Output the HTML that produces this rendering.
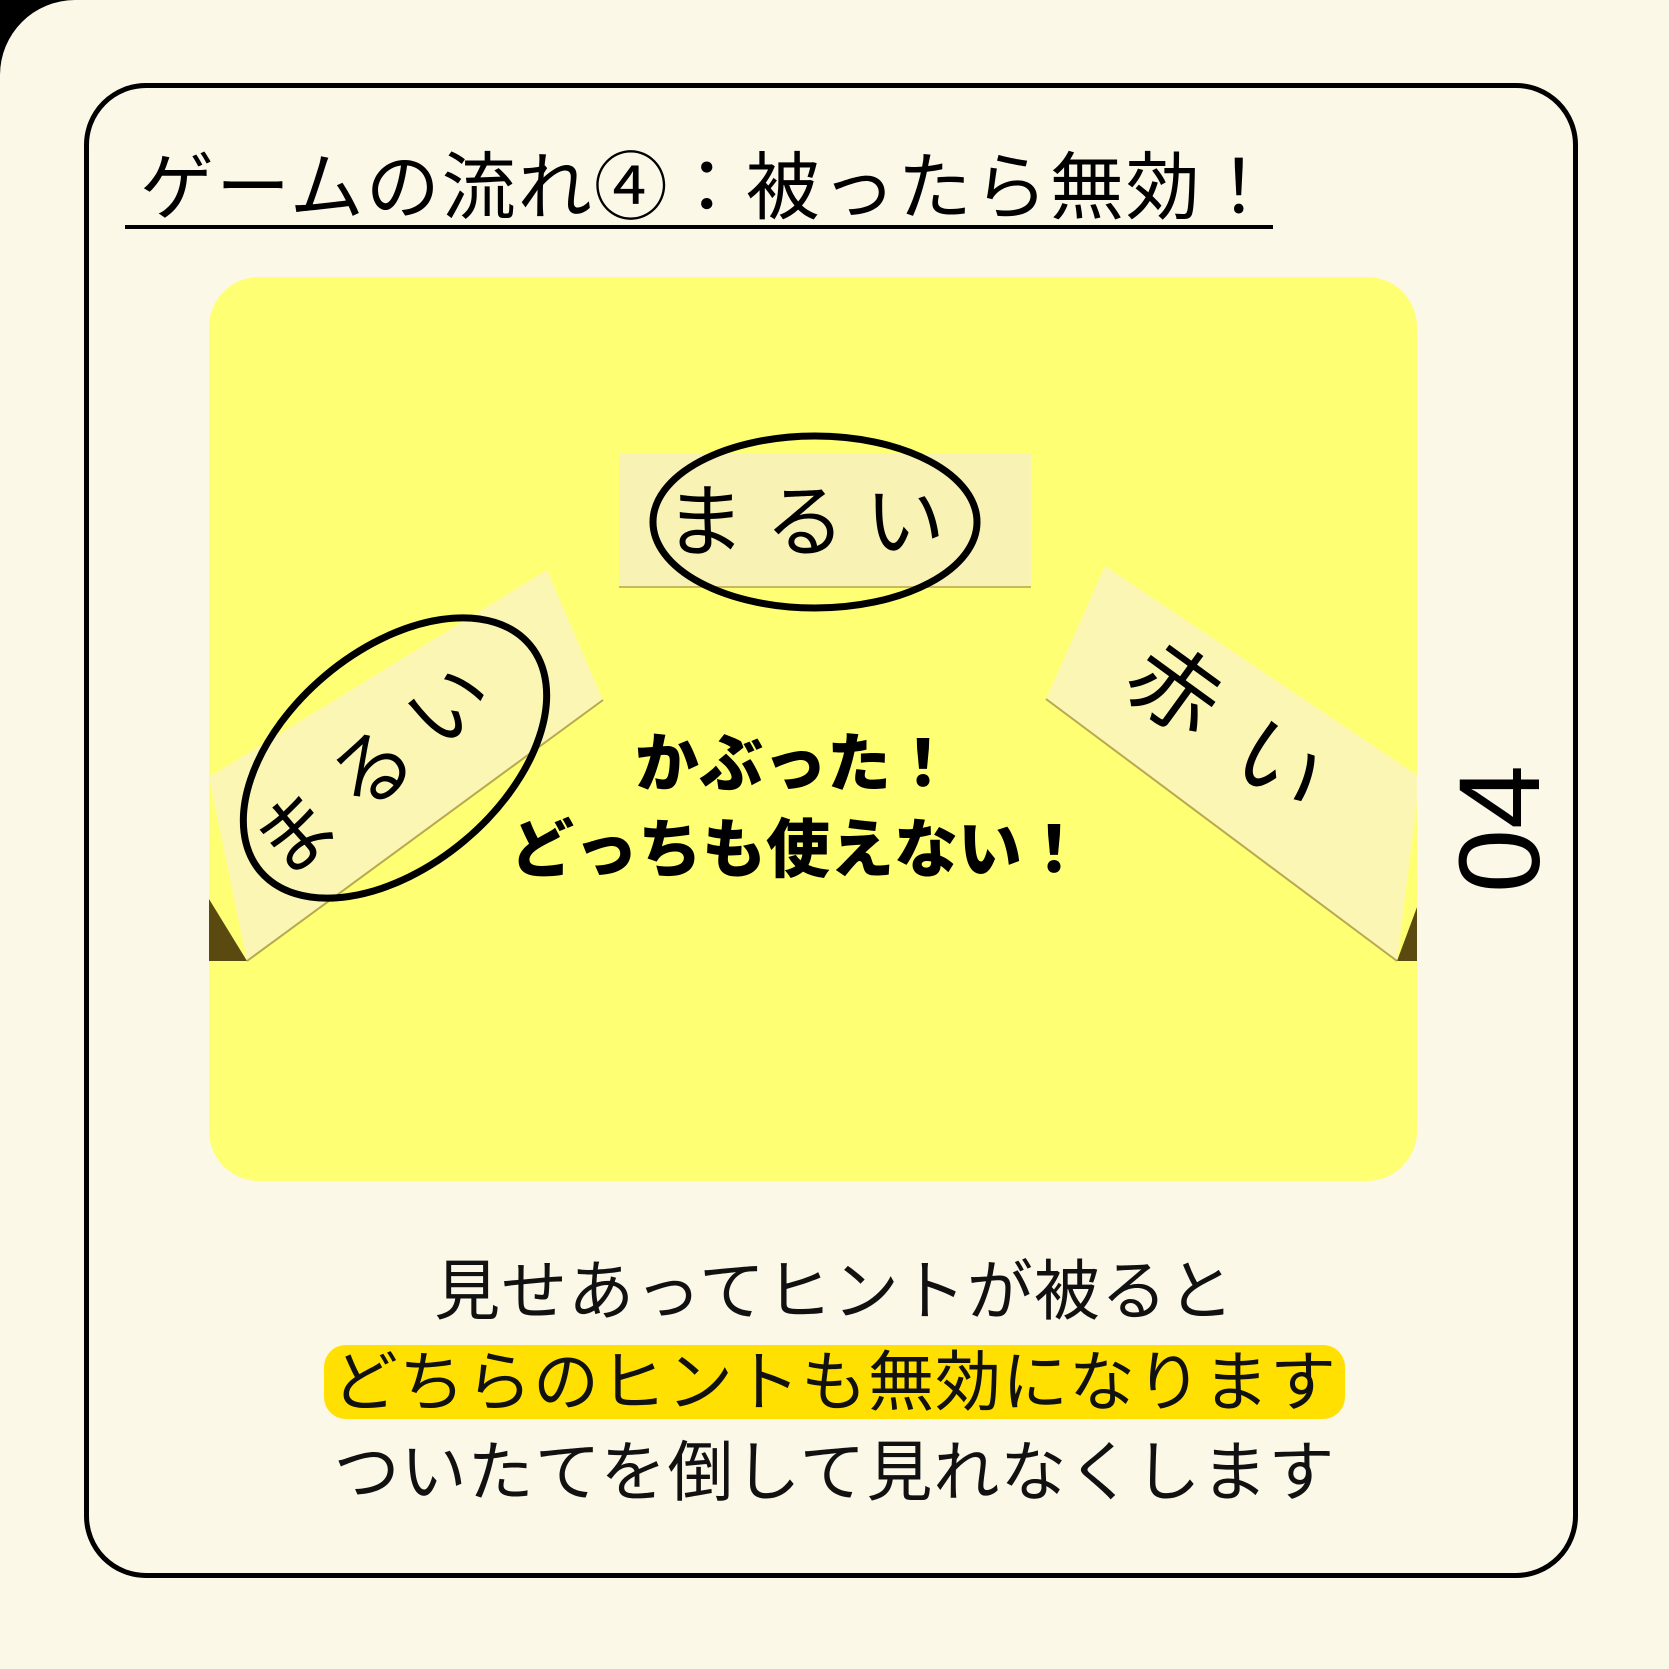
<!DOCTYPE html>
<html><head><meta charset="utf-8"><style>
html,body{margin:0;padding:0}
body{width:1669px;height:1669px;background:#000;position:relative;overflow:hidden;font-family:"Liberation Sans","Noto Sans CJK JP",sans-serif}
.bg{position:absolute;left:0;top:0;width:1669px;height:1669px;background:#fbf8e8;border-top-left-radius:75px}
.frame{position:absolute;left:84px;top:83px;width:1494px;height:1495px;border:5px solid #000;border-radius:62px;box-sizing:border-box}
.title{position:absolute;left:140px;top:138px;font-size:74px;line-height:100px;white-space:nowrap;color:#000;letter-spacing:2px}
.uline{position:absolute;left:125px;top:225px;width:1148px;height:4px;background:#000}
.panel{position:absolute;left:209px;top:277px;width:1208px;height:904px;background:#ffff73;border-radius:50px;overflow:hidden}
.line{position:absolute;left:0;width:1669px;text-align:center;font-size:66px;line-height:80px;color:#111;white-space:nowrap;letter-spacing:1px}
.hl{background:#ffe000;border-radius:22px;padding:0 8px}
.num{position:absolute;left:1440px;top:775px;width:120px;height:116px;font-size:115px;line-height:116px;transform:rotate(-90deg);text-align:center;color:#000}
</style></head><body>
<div class="bg"></div>
<div class="frame"></div>
<div class="title">ゲームの流れ④：被ったら無効！</div>
<div class="uline"></div>
<div class="panel">
<svg width="1208" height="904" viewBox="209 277 1208 904" style="position:absolute;left:0;top:0">
 <polygon points="209,777 547,570 603,700 247,961" fill="#fbf6b4"/>
 <polygon points="209,899 247,961 209,961" fill="#5a4a10"/>
 <line x1="603" y1="700" x2="247" y2="961" stroke="#b8a850" stroke-width="2"/>
 <polygon points="1105,566 1420,777 1397,961 1046,699" fill="#fbf6b4"/>
 <polygon points="1420,899 1420,961 1397,961" fill="#5a4a10"/>
 <line x1="1046" y1="699" x2="1397" y2="961" stroke="#b8a850" stroke-width="2"/>
 <rect x="619" y="454" width="412" height="134" fill="#f8f2b4"/>
 <line x1="619" y1="587" x2="1031" y2="587" stroke="#c8b860" stroke-width="2"/>
 <ellipse cx="815" cy="522" rx="162" ry="86" fill="none" stroke="#000" stroke-width="7"/>
 <ellipse cx="395" cy="758" rx="176" ry="108" transform="rotate(-40 395 758)" fill="none" stroke="#000" stroke-width="7"/>
 <text x="815" y="550" font-size="80" text-anchor="middle" font-family="Noto Sans CJK JP,sans-serif" font-weight="400" letter-spacing="20">まるい</text>
 <text x="0" y="0" font-size="80" text-anchor="middle" font-family="Noto Sans CJK JP,sans-serif" font-weight="400" letter-spacing="20" transform="translate(398,785) rotate(-40)">まるい</text>
 <text x="0" y="0" font-size="90" text-anchor="middle" font-family="Noto Sans CJK JP,sans-serif" font-weight="400" letter-spacing="40" transform="translate(1225,765) rotate(36)">赤い</text>
 <text x="795" y="786" font-size="64" text-anchor="middle" font-family="Noto Sans CJK JP,sans-serif" font-weight="900">かぶった！</text>
 <text x="798" y="872" font-size="64" text-anchor="middle" font-family="Noto Sans CJK JP,sans-serif" font-weight="900">どっちも使えない！</text>
</svg>
</div>
<div class="num">04</div>
<div class="line" style="top:1251px">見せあってヒントが被ると</div>
<div class="line" style="top:1342px"><span class="hl">どちらのヒントも無効になります</span></div>
<div class="line" style="top:1432px">ついたてを倒して見れなくします</div>
</body></html>
